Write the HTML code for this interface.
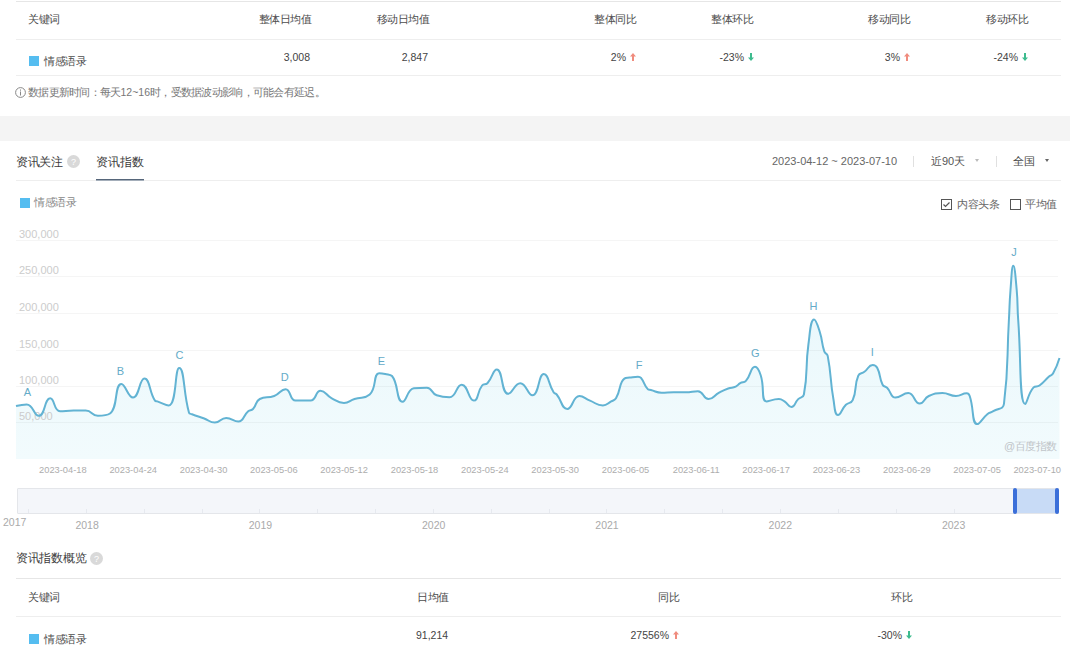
<!DOCTYPE html>
<html><head><meta charset="utf-8"><title>资讯指数</title><style>
html,body{margin:0;padding:0;width:1070px;height:660px;overflow:hidden;background:#fff;font-family:"Liberation Sans",sans-serif;}
.t{position:absolute;white-space:nowrap;line-height:1;}
.b{position:absolute;}
</style></head><body>
<div class="b" style="left:16px;top:1px;width:1045px;height:1px;background:#e6e6e6"></div>
<div class="b" style="left:16px;top:39px;width:1045px;height:1px;background:#eeeeee"></div>
<div class="b" style="left:16px;top:75px;width:1045px;height:1px;background:#eeeeee"></div>
<div class="t" style="left:28px;top:14px;font-size:10px;color:#4d4d4d;letter-spacing:-0.5px;font-size:11px;">关键词</div>
<div class="t" style="left:-89px;width:400px;text-align:right;top:14px;font-size:10px;color:#4d4d4d;letter-spacing:-0.5px;font-size:11px;">整体日均值</div>
<div class="t" style="left:29px;width:400px;text-align:right;top:14px;font-size:10px;color:#4d4d4d;letter-spacing:-0.5px;font-size:11px;">移动日均值</div>
<div class="t" style="left:236px;width:400px;text-align:right;top:14px;font-size:10px;color:#4d4d4d;letter-spacing:-0.5px;font-size:11px;">整体同比</div>
<div class="t" style="left:353px;width:400px;text-align:right;top:14px;font-size:10px;color:#4d4d4d;letter-spacing:-0.5px;font-size:11px;">整体环比</div>
<div class="t" style="left:510px;width:400px;text-align:right;top:14px;font-size:10px;color:#4d4d4d;letter-spacing:-0.5px;font-size:11px;">移动同比</div>
<div class="t" style="left:628px;width:400px;text-align:right;top:14px;font-size:10px;color:#4d4d4d;letter-spacing:-0.5px;font-size:11px;">移动环比</div>
<div class="b" style="left:29px;top:56px;width:10px;height:10px;background:#55bdf0"></div>
<div class="t" style="left:44px;top:56px;font-size:10px;color:#4d4d4d;letter-spacing:-0.5px;font-size:11px;">情感语录</div>
<div class="t" style="left:-90px;width:400px;text-align:right;top:52px;font-size:10.5px;color:#444;">3,008</div>
<div class="t" style="left:28px;width:400px;text-align:right;top:52px;font-size:10.5px;color:#444;">2,847</div>
<div class="t" style="left:236px;width:400px;text-align:right;top:52px;font-size:10.5px;color:#444;">2%<svg width="6" height="8" viewBox="0 0 6 8" style="vertical-align:0px;margin-left:4px"><path d="M3 0 L6 3.5 H4 V8 H2 V3.5 H0 Z" fill="#f08c7e"/></svg></div>
<div class="t" style="left:354px;width:400px;text-align:right;top:52px;font-size:10.5px;color:#444;">-23%<svg width="6" height="8" viewBox="0 0 6 8" style="vertical-align:0px;margin-left:4px"><path d="M3 8 L6 4.5 H4 V0 H2 V4.5 H0 Z" fill="#3dbb8e"/></svg></div>
<div class="t" style="left:510px;width:400px;text-align:right;top:52px;font-size:10.5px;color:#444;">3%<svg width="6" height="8" viewBox="0 0 6 8" style="vertical-align:0px;margin-left:4px"><path d="M3 0 L6 3.5 H4 V8 H2 V3.5 H0 Z" fill="#f08c7e"/></svg></div>
<div class="t" style="left:628px;width:400px;text-align:right;top:52px;font-size:10.5px;color:#444;">-24%<svg width="6" height="8" viewBox="0 0 6 8" style="vertical-align:0px;margin-left:4px"><path d="M3 8 L6 4.5 H4 V0 H2 V4.5 H0 Z" fill="#3dbb8e"/></svg></div>
<svg class="b" style="left:15px;top:87px" width="11" height="11" viewBox="0 0 11 11"><circle cx="5.5" cy="5.5" r="4.9" fill="none" stroke="#888" stroke-width="1"/><rect x="5" y="2.5" width="1" height="1.2" fill="#888"/><rect x="5" y="4.5" width="1" height="4" fill="#888"/></svg>
<div class="t" style="left:28px;top:87px;font-size:10.5px;color:#777;"><span style="font-size:11px;letter-spacing:-0.72px">数据更新时间：每天</span>12~16<span style="font-size:11px;letter-spacing:-0.72px">时，受数据波动影响，可能会有延迟。</span></div>
<div class="b" style="left:0px;top:116px;width:1070px;height:25px;background:#f4f4f4"></div>
<div class="t" style="left:16px;top:156px;font-size:12px;color:#3d3d3d;letter-spacing:-0.35px;">资讯关注</div>
<svg class="b" style="left:67px;top:155px" width="13" height="13" viewBox="0 0 13 13"><circle cx="6.5" cy="6.5" r="6.5" fill="#d9d9d9"/><text x="6.5" y="10" font-size="9" text-anchor="middle" fill="#fff" font-family="Liberation Sans">?</text></svg>
<div class="t" style="left:96px;top:156px;font-size:12px;color:#3d3d3d;">资讯指数</div>
<div class="b" style="left:16px;top:180px;width:1045px;height:1px;background:#eeeeee"></div>
<div class="b" style="left:96px;top:179px;width:48px;height:1px;background:#56667a"></div>
<div class="b" style="left:96px;top:180px;width:48px;height:1px;background:#a4aeba"></div>
<div class="t" style="left:772px;top:156px;font-size:11px;color:#666;">2023-04-12 ~ 2023-07-10</div>
<div class="b" style="left:913px;top:156px;width:1px;height:11px;background:#e0e0e0"></div>
<div class="t" style="left:931px;top:156px;font-size:11px;color:#555;">近90天</div>
<svg class="b" style="left:975px;top:159px" width="4" height="3" viewBox="0 0 4 3"><path d="M0 0H4L2 3Z" fill="#bbb"/></svg>
<div class="b" style="left:996px;top:156px;width:1px;height:11px;background:#e0e0e0"></div>
<div class="t" style="left:1013px;top:156px;font-size:11px;color:#444;">全国</div>
<svg class="b" style="left:1045px;top:159px" width="4" height="3" viewBox="0 0 4 3"><path d="M0 0H4L2 3Z" fill="#666"/></svg>
<div class="b" style="left:20px;top:198px;width:10px;height:10px;background:#55bdf0"></div>
<div class="t" style="left:34px;top:197px;font-size:10px;color:#888;letter-spacing:-0.5px;font-size:11px;">情感语录</div>
<svg class="b" style="left:941px;top:199px" width="11" height="11" viewBox="0 0 11 11"><rect x="0.5" y="0.5" width="10" height="10" fill="none" stroke="#555" stroke-width="1"/><path d="M2.5 5.5 L4.5 7.5 L8.5 3.5" fill="none" stroke="#555" stroke-width="1.2"/></svg>
<div class="t" style="left:957px;top:199px;font-size:10px;color:#666;letter-spacing:-0.5px;font-size:11px;">内容头条</div>
<svg class="b" style="left:1010px;top:199px" width="11" height="11" viewBox="0 0 11 11"><rect x="0.5" y="0.5" width="10" height="10" fill="none" stroke="#555" stroke-width="1"/></svg>
<div class="t" style="left:1025px;top:199px;font-size:10px;color:#666;letter-spacing:-0.5px;font-size:11px;">平均值</div>
<svg class="b" style="left:0;top:0" width="1070" height="480" viewBox="0 0 1070 480">
<defs><linearGradient id="g" x1="0" y1="0" x2="0" y2="1"><stop offset="0" stop-color="#e8f7fb"/><stop offset="1" stop-color="#f2fbfd"/></linearGradient></defs>
<path d="M16.00,406.00 C16.00,406.00 22.21,404.40 26.70,404.40 C33.61,404.40 33.59,415.80 38.80,415.80 C45.34,415.80 44.23,398.30 50.20,398.30 C54.83,398.30 53.64,411.20 60.00,411.20 C65.34,411.20 66.80,410.50 73.60,410.50 C79.70,410.50 79.97,410.50 85.80,410.50 C92.12,410.50 91.64,415.80 97.90,415.80 C103.74,415.80 106.71,415.80 110.00,413.50 C118.46,407.59 114.05,384.00 121.40,384.00 C125.55,384.00 127.87,397.60 133.00,397.60 C139.37,397.60 139.17,378.60 144.40,378.60 C150.17,378.60 149.13,392.58 155.00,400.60 C155.58,401.40 156.15,400.99 157.30,401.40 C162.95,403.44 166.02,405.50 168.60,405.50 C176.97,405.50 174.51,368.00 179.20,368.00 C184.71,368.00 183.04,392.23 189.00,412.70 C189.44,414.20 190.44,413.60 192.00,414.20 C198.04,416.50 198.13,416.26 204.20,418.50 C209.53,420.46 209.52,422.60 214.80,422.60 C220.52,422.60 220.40,418.00 226.20,418.00 C232.15,418.00 233.15,421.50 238.30,421.50 C244.15,421.50 242.83,415.76 248.20,411.20 C250.18,409.51 251.24,410.85 253.00,409.00 C257.04,404.75 255.02,401.47 259.80,399.00 C265.62,396.00 267.42,398.58 274.20,396.00 C280.32,393.68 280.62,389.20 285.60,389.20 C291.27,389.20 289.25,400.60 295.50,400.60 C301.75,400.60 304.10,400.60 310.60,400.60 C316.60,400.60 315.13,390.80 320.50,390.80 C325.73,390.80 325.81,395.22 331.80,398.30 C337.56,401.27 337.89,402.90 344.00,402.90 C349.24,402.90 349.18,400.74 354.50,399.00 C362.03,396.54 364.71,399.00 369.70,394.50 C377.01,387.92 372.97,373.30 379.10,373.30 C380.72,373.30 382.21,373.37 385.20,374.00 C388.66,374.72 390.24,374.00 392.00,376.00 C398.94,383.87 395.90,401.80 402.60,401.80 C406.85,401.80 406.91,388.88 413.90,388.20 C419.01,387.70 421.00,387.70 426.80,387.70 C432.40,387.70 431.13,393.37 436.70,395.30 C442.48,397.30 444.19,397.30 449.50,397.30 C456.69,397.30 456.02,384.70 461.70,384.70 C468.17,384.70 468.32,400.60 473.80,400.60 C478.52,400.60 477.01,392.02 482.10,385.50 C483.81,383.32 485.50,385.26 487.40,383.20 C492.85,377.26 492.82,369.50 496.80,369.50 C503.22,369.50 500.85,393.80 508.20,393.80 C512.60,393.80 514.44,383.20 520.30,383.20 C526.54,383.20 527.52,395.30 532.40,395.30 C539.27,395.30 538.10,374.10 543.80,374.10 C548.70,374.10 548.15,383.68 553.60,392.30 C554.60,393.88 555.50,393.04 556.70,394.50 C562.35,401.39 561.59,409.00 567.30,409.00 C572.94,409.00 572.52,396.00 579.40,396.00 C583.87,396.00 584.65,398.44 590.00,400.60 C596.40,403.19 596.56,405.50 602.90,405.50 C607.16,405.50 607.15,403.63 611.20,401.40 C613.70,400.03 614.61,400.70 616.00,398.30 C621.21,389.30 618.93,382.57 624.40,378.60 C625.78,377.60 627.03,377.97 629.70,377.60 C633.83,377.02 633.93,376.70 638.00,376.70 C639.58,376.70 640.03,376.70 641.00,377.90 C644.98,382.82 643.89,385.79 647.90,389.20 C648.84,390.00 649.40,389.61 650.90,390.00 C656.20,391.36 656.11,392.70 661.50,392.70 C667.46,392.70 667.55,392.30 673.60,392.30 C679.70,392.30 679.71,392.30 685.80,392.30 C691.86,392.30 692.46,391.20 697.90,391.20 C703.81,391.20 703.03,399.10 708.50,399.10 C713.63,399.10 713.66,395.63 719.10,392.70 C723.51,390.33 723.52,390.22 728.20,388.50 C731.82,387.17 732.23,388.13 735.70,386.60 C738.23,385.48 737.76,384.56 740.20,383.20 C742.86,381.71 743.92,383.10 745.90,380.90 C751.32,374.90 750.39,366.80 755.00,366.80 C757.79,366.80 759.13,370.45 760.70,375.20 C764.83,387.75 760.70,401.40 766.40,401.40 C769.10,401.40 772.77,399.10 778.90,399.10 C781.82,399.10 781.97,399.80 784.50,401.40 C788.22,403.75 788.25,407.00 791.40,407.00 C795.10,407.00 794.53,402.77 798.20,399.10 C800.78,396.52 803.25,397.98 803.90,394.50 C808.35,370.68 805.02,369.32 808.40,344.50 C810.12,331.82 810.39,319.50 814.10,319.50 C816.09,319.50 817.72,325.49 819.80,332.00 C822.82,341.44 821.22,342.09 824.30,351.40 C825.17,354.04 827.18,353.17 827.70,355.90 C831.73,376.97 829.68,377.63 833.40,399.00 C834.83,407.18 834.48,415.00 838.00,415.00 C840.73,415.00 841.41,409.32 845.90,404.80 C848.76,401.92 851.18,403.78 852.70,400.20 C857.38,389.18 853.75,386.65 858.30,375.60 C859.60,372.45 861.51,373.93 864.40,371.80 C868.71,368.63 868.43,365.00 872.70,365.00 C874.88,365.00 876.12,365.65 877.30,368.00 C881.07,375.50 878.86,377.17 882.60,384.70 C883.76,387.02 885.20,385.80 887.10,387.70 C891.65,392.25 890.32,397.60 895.50,397.60 C900.92,397.60 902.66,393.00 908.30,393.00 C914.76,393.00 913.88,403.60 919.70,403.60 C924.13,403.60 923.58,398.44 928.80,396.00 C934.93,393.14 935.60,393.00 942.40,393.00 C949.20,393.00 949.22,396.00 956.00,396.00 C961.37,396.00 961.68,393.30 966.70,393.30 C968.53,393.30 969.05,394.12 969.70,396.00 C974.35,409.52 971.37,424.10 977.30,424.10 C980.17,424.10 981.88,418.57 987.30,414.20 C989.88,412.12 990.48,412.99 993.30,411.20 C998.83,407.69 1003.23,409.78 1004.00,403.60 C1008.90,364.18 1006.51,361.80 1008.90,320.00 C1009.76,305.00 1009.29,304.96 1010.50,290.00 C1011.49,277.86 1011.75,265.80 1013.30,265.80 C1014.85,265.80 1015.60,277.84 1016.70,290.00 C1018.05,304.94 1017.07,305.03 1018.20,320.00 C1021.37,362.03 1018.99,404.00 1025.30,404.00 C1026.69,404.00 1028.28,393.09 1033.60,387.40 C1035.38,385.50 1037.03,387.25 1039.50,385.50 C1044.73,381.80 1044.12,380.84 1049.00,376.50 C1050.87,374.84 1051.80,375.62 1053.00,373.50 C1057.05,366.37 1059.50,358.00 1059.50,358.00 L1059.50,459 L16.00,459 Z" fill="url(#g)"/>
</svg>
<div class="b" style="left:16px;top:240px;width:1042px;height:1px;background:rgba(0,0,0,0.04)"></div>
<div class="b" style="left:16px;top:276px;width:1042px;height:1px;background:rgba(0,0,0,0.04)"></div>
<div class="b" style="left:16px;top:313px;width:1042px;height:1px;background:rgba(0,0,0,0.04)"></div>
<div class="b" style="left:16px;top:350px;width:1042px;height:1px;background:rgba(0,0,0,0.04)"></div>
<div class="b" style="left:16px;top:386px;width:1042px;height:1px;background:rgba(0,0,0,0.04)"></div>
<div class="b" style="left:16px;top:422px;width:1042px;height:1px;background:rgba(0,0,0,0.04)"></div>
<div class="t" style="left:19px;top:229px;font-size:11px;color:#cccccc;">300,000</div>
<div class="t" style="left:19px;top:265px;font-size:11px;color:#cccccc;">250,000</div>
<div class="t" style="left:19px;top:302px;font-size:11px;color:#cccccc;">200,000</div>
<div class="t" style="left:19px;top:339px;font-size:11px;color:#cccccc;">150,000</div>
<div class="t" style="left:19px;top:375px;font-size:11px;color:#cccccc;">100,000</div>
<div class="t" style="left:19px;top:411px;font-size:11px;color:#cccccc;">50,000</div>
<svg class="b" style="left:0;top:0" width="1070" height="480" viewBox="0 0 1070 480"><path d="M16.00,406.00 C16.00,406.00 22.21,404.40 26.70,404.40 C33.61,404.40 33.59,415.80 38.80,415.80 C45.34,415.80 44.23,398.30 50.20,398.30 C54.83,398.30 53.64,411.20 60.00,411.20 C65.34,411.20 66.80,410.50 73.60,410.50 C79.70,410.50 79.97,410.50 85.80,410.50 C92.12,410.50 91.64,415.80 97.90,415.80 C103.74,415.80 106.71,415.80 110.00,413.50 C118.46,407.59 114.05,384.00 121.40,384.00 C125.55,384.00 127.87,397.60 133.00,397.60 C139.37,397.60 139.17,378.60 144.40,378.60 C150.17,378.60 149.13,392.58 155.00,400.60 C155.58,401.40 156.15,400.99 157.30,401.40 C162.95,403.44 166.02,405.50 168.60,405.50 C176.97,405.50 174.51,368.00 179.20,368.00 C184.71,368.00 183.04,392.23 189.00,412.70 C189.44,414.20 190.44,413.60 192.00,414.20 C198.04,416.50 198.13,416.26 204.20,418.50 C209.53,420.46 209.52,422.60 214.80,422.60 C220.52,422.60 220.40,418.00 226.20,418.00 C232.15,418.00 233.15,421.50 238.30,421.50 C244.15,421.50 242.83,415.76 248.20,411.20 C250.18,409.51 251.24,410.85 253.00,409.00 C257.04,404.75 255.02,401.47 259.80,399.00 C265.62,396.00 267.42,398.58 274.20,396.00 C280.32,393.68 280.62,389.20 285.60,389.20 C291.27,389.20 289.25,400.60 295.50,400.60 C301.75,400.60 304.10,400.60 310.60,400.60 C316.60,400.60 315.13,390.80 320.50,390.80 C325.73,390.80 325.81,395.22 331.80,398.30 C337.56,401.27 337.89,402.90 344.00,402.90 C349.24,402.90 349.18,400.74 354.50,399.00 C362.03,396.54 364.71,399.00 369.70,394.50 C377.01,387.92 372.97,373.30 379.10,373.30 C380.72,373.30 382.21,373.37 385.20,374.00 C388.66,374.72 390.24,374.00 392.00,376.00 C398.94,383.87 395.90,401.80 402.60,401.80 C406.85,401.80 406.91,388.88 413.90,388.20 C419.01,387.70 421.00,387.70 426.80,387.70 C432.40,387.70 431.13,393.37 436.70,395.30 C442.48,397.30 444.19,397.30 449.50,397.30 C456.69,397.30 456.02,384.70 461.70,384.70 C468.17,384.70 468.32,400.60 473.80,400.60 C478.52,400.60 477.01,392.02 482.10,385.50 C483.81,383.32 485.50,385.26 487.40,383.20 C492.85,377.26 492.82,369.50 496.80,369.50 C503.22,369.50 500.85,393.80 508.20,393.80 C512.60,393.80 514.44,383.20 520.30,383.20 C526.54,383.20 527.52,395.30 532.40,395.30 C539.27,395.30 538.10,374.10 543.80,374.10 C548.70,374.10 548.15,383.68 553.60,392.30 C554.60,393.88 555.50,393.04 556.70,394.50 C562.35,401.39 561.59,409.00 567.30,409.00 C572.94,409.00 572.52,396.00 579.40,396.00 C583.87,396.00 584.65,398.44 590.00,400.60 C596.40,403.19 596.56,405.50 602.90,405.50 C607.16,405.50 607.15,403.63 611.20,401.40 C613.70,400.03 614.61,400.70 616.00,398.30 C621.21,389.30 618.93,382.57 624.40,378.60 C625.78,377.60 627.03,377.97 629.70,377.60 C633.83,377.02 633.93,376.70 638.00,376.70 C639.58,376.70 640.03,376.70 641.00,377.90 C644.98,382.82 643.89,385.79 647.90,389.20 C648.84,390.00 649.40,389.61 650.90,390.00 C656.20,391.36 656.11,392.70 661.50,392.70 C667.46,392.70 667.55,392.30 673.60,392.30 C679.70,392.30 679.71,392.30 685.80,392.30 C691.86,392.30 692.46,391.20 697.90,391.20 C703.81,391.20 703.03,399.10 708.50,399.10 C713.63,399.10 713.66,395.63 719.10,392.70 C723.51,390.33 723.52,390.22 728.20,388.50 C731.82,387.17 732.23,388.13 735.70,386.60 C738.23,385.48 737.76,384.56 740.20,383.20 C742.86,381.71 743.92,383.10 745.90,380.90 C751.32,374.90 750.39,366.80 755.00,366.80 C757.79,366.80 759.13,370.45 760.70,375.20 C764.83,387.75 760.70,401.40 766.40,401.40 C769.10,401.40 772.77,399.10 778.90,399.10 C781.82,399.10 781.97,399.80 784.50,401.40 C788.22,403.75 788.25,407.00 791.40,407.00 C795.10,407.00 794.53,402.77 798.20,399.10 C800.78,396.52 803.25,397.98 803.90,394.50 C808.35,370.68 805.02,369.32 808.40,344.50 C810.12,331.82 810.39,319.50 814.10,319.50 C816.09,319.50 817.72,325.49 819.80,332.00 C822.82,341.44 821.22,342.09 824.30,351.40 C825.17,354.04 827.18,353.17 827.70,355.90 C831.73,376.97 829.68,377.63 833.40,399.00 C834.83,407.18 834.48,415.00 838.00,415.00 C840.73,415.00 841.41,409.32 845.90,404.80 C848.76,401.92 851.18,403.78 852.70,400.20 C857.38,389.18 853.75,386.65 858.30,375.60 C859.60,372.45 861.51,373.93 864.40,371.80 C868.71,368.63 868.43,365.00 872.70,365.00 C874.88,365.00 876.12,365.65 877.30,368.00 C881.07,375.50 878.86,377.17 882.60,384.70 C883.76,387.02 885.20,385.80 887.10,387.70 C891.65,392.25 890.32,397.60 895.50,397.60 C900.92,397.60 902.66,393.00 908.30,393.00 C914.76,393.00 913.88,403.60 919.70,403.60 C924.13,403.60 923.58,398.44 928.80,396.00 C934.93,393.14 935.60,393.00 942.40,393.00 C949.20,393.00 949.22,396.00 956.00,396.00 C961.37,396.00 961.68,393.30 966.70,393.30 C968.53,393.30 969.05,394.12 969.70,396.00 C974.35,409.52 971.37,424.10 977.30,424.10 C980.17,424.10 981.88,418.57 987.30,414.20 C989.88,412.12 990.48,412.99 993.30,411.20 C998.83,407.69 1003.23,409.78 1004.00,403.60 C1008.90,364.18 1006.51,361.80 1008.90,320.00 C1009.76,305.00 1009.29,304.96 1010.50,290.00 C1011.49,277.86 1011.75,265.80 1013.30,265.80 C1014.85,265.80 1015.60,277.84 1016.70,290.00 C1018.05,304.94 1017.07,305.03 1018.20,320.00 C1021.37,362.03 1018.99,404.00 1025.30,404.00 C1026.69,404.00 1028.28,393.09 1033.60,387.40 C1035.38,385.50 1037.03,387.25 1039.50,385.50 C1044.73,381.80 1044.12,380.84 1049.00,376.50 C1050.87,374.84 1051.80,375.62 1053.00,373.50 C1057.05,366.37 1059.50,358.00 1059.50,358.00" fill="none" stroke="#62b3d3" stroke-width="2" stroke-linejoin="round"/></svg>
<div class="t" style="left:7.5px;width:40px;text-align:center;top:387px;font-size:11px;color:#64abc8">A</div>
<div class="t" style="left:100.5px;width:40px;text-align:center;top:366px;font-size:11px;color:#64abc8">B</div>
<div class="t" style="left:159.4px;width:40px;text-align:center;top:350px;font-size:11px;color:#64abc8">C</div>
<div class="t" style="left:264.8px;width:40px;text-align:center;top:372px;font-size:11px;color:#64abc8">D</div>
<div class="t" style="left:361.5px;width:40px;text-align:center;top:356px;font-size:11px;color:#64abc8">E</div>
<div class="t" style="left:619px;width:40px;text-align:center;top:360px;font-size:11px;color:#64abc8">F</div>
<div class="t" style="left:735.2px;width:40px;text-align:center;top:348px;font-size:11px;color:#64abc8">G</div>
<div class="t" style="left:793.6px;width:40px;text-align:center;top:301px;font-size:11px;color:#64abc8">H</div>
<div class="t" style="left:852.2px;width:40px;text-align:center;top:347px;font-size:11px;color:#64abc8">I</div>
<div class="t" style="left:994px;width:40px;text-align:center;top:247px;font-size:11px;color:#64abc8">J</div>
<div class="t" style="left:-313.4px;width:400px;text-align:right;top:466px;font-size:9.3px;color:#adadad;">2023-04-18</div>
<div class="t" style="left:-243.0px;width:400px;text-align:right;top:466px;font-size:9.3px;color:#adadad;">2023-04-24</div>
<div class="t" style="left:-172.7px;width:400px;text-align:right;top:466px;font-size:9.3px;color:#adadad;">2023-04-30</div>
<div class="t" style="left:-102.39999999999998px;width:400px;text-align:right;top:466px;font-size:9.3px;color:#adadad;">2023-05-06</div>
<div class="t" style="left:-32.10000000000002px;width:400px;text-align:right;top:466px;font-size:9.3px;color:#adadad;">2023-05-12</div>
<div class="t" style="left:38.30000000000001px;width:400px;text-align:right;top:466px;font-size:9.3px;color:#adadad;">2023-05-18</div>
<div class="t" style="left:108.60000000000002px;width:400px;text-align:right;top:466px;font-size:9.3px;color:#adadad;">2023-05-24</div>
<div class="t" style="left:178.89999999999998px;width:400px;text-align:right;top:466px;font-size:9.3px;color:#adadad;">2023-05-30</div>
<div class="t" style="left:249.29999999999995px;width:400px;text-align:right;top:466px;font-size:9.3px;color:#adadad;">2023-06-05</div>
<div class="t" style="left:319.6px;width:400px;text-align:right;top:466px;font-size:9.3px;color:#adadad;">2023-06-11</div>
<div class="t" style="left:389.9px;width:400px;text-align:right;top:466px;font-size:9.3px;color:#adadad;">2023-06-17</div>
<div class="t" style="left:460.20000000000005px;width:400px;text-align:right;top:466px;font-size:9.3px;color:#adadad;">2023-06-23</div>
<div class="t" style="left:530.6px;width:400px;text-align:right;top:466px;font-size:9.3px;color:#adadad;">2023-06-29</div>
<div class="t" style="left:600.9px;width:400px;text-align:right;top:466px;font-size:9.3px;color:#adadad;">2023-07-05</div>
<div class="t" style="left:661px;width:400px;text-align:right;top:466px;font-size:9.3px;color:#adadad;">2023-07-10</div>
<div class="t" style="left:1004px;top:441px;font-size:10px;color:#bfc4c8;letter-spacing:-0.5px;font-size:11px;">@百度指数</div>
<div class="b" style="left:17px;top:488px;width:1040px;height:24px;background:#f4f6fa;border:1px solid #e4e6ea;border-radius:1px"></div>
<div class="b" style="left:28px;top:509px;width:1px;height:4px;background:#e6e9ef"></div>
<div class="b" style="left:86px;top:509px;width:1px;height:4px;background:#e6e9ef"></div>
<div class="b" style="left:144px;top:509px;width:1px;height:4px;background:#e6e9ef"></div>
<div class="b" style="left:202px;top:509px;width:1px;height:4px;background:#e6e9ef"></div>
<div class="b" style="left:259px;top:509px;width:1px;height:4px;background:#e6e9ef"></div>
<div class="b" style="left:317px;top:509px;width:1px;height:4px;background:#e6e9ef"></div>
<div class="b" style="left:375px;top:509px;width:1px;height:4px;background:#e6e9ef"></div>
<div class="b" style="left:433px;top:509px;width:1px;height:4px;background:#e6e9ef"></div>
<div class="b" style="left:491px;top:509px;width:1px;height:4px;background:#e6e9ef"></div>
<div class="b" style="left:549px;top:509px;width:1px;height:4px;background:#e6e9ef"></div>
<div class="b" style="left:606px;top:509px;width:1px;height:4px;background:#e6e9ef"></div>
<div class="b" style="left:664px;top:509px;width:1px;height:4px;background:#e6e9ef"></div>
<div class="b" style="left:722px;top:509px;width:1px;height:4px;background:#e6e9ef"></div>
<div class="b" style="left:780px;top:509px;width:1px;height:4px;background:#e6e9ef"></div>
<div class="b" style="left:838px;top:509px;width:1px;height:4px;background:#e6e9ef"></div>
<div class="b" style="left:896px;top:509px;width:1px;height:4px;background:#e6e9ef"></div>
<div class="b" style="left:954px;top:509px;width:1px;height:4px;background:#e6e9ef"></div>
<div class="b" style="left:1015px;top:489px;width:42px;height:24px;background:#c8dbf6"></div>
<div class="b" style="left:1013px;top:488px;width:4px;height:26px;background:#3b6fd9;border-radius:2px"></div>
<div class="b" style="left:1055px;top:488px;width:4px;height:26px;background:#3b6fd9;border-radius:2px"></div>
<div class="t" style="left:3px;top:517px;font-size:10.5px;color:#aaa;">2017</div>
<div class="t" style="left:57.099999999999994px;width:60px;text-align:center;top:520px;font-size:10.5px;color:#aaa">2018</div>
<div class="t" style="left:230.39999999999998px;width:60px;text-align:center;top:520px;font-size:10.5px;color:#aaa">2019</div>
<div class="t" style="left:403.70000000000005px;width:60px;text-align:center;top:520px;font-size:10.5px;color:#aaa">2020</div>
<div class="t" style="left:577.0000000000001px;width:60px;text-align:center;top:520px;font-size:10.5px;color:#aaa">2021</div>
<div class="t" style="left:750.3000000000001px;width:60px;text-align:center;top:520px;font-size:10.5px;color:#aaa">2022</div>
<div class="t" style="left:923.6px;width:60px;text-align:center;top:520px;font-size:10.5px;color:#aaa">2023</div>
<div class="t" style="left:16px;top:552px;font-size:12px;color:#3d3d3d;letter-spacing:-0.3px;">资讯指数概览</div>
<svg class="b" style="left:90px;top:552px" width="13" height="13" viewBox="0 0 13 13"><circle cx="6.5" cy="6.5" r="6.5" fill="#d9d9d9"/><text x="6.5" y="10" font-size="9" text-anchor="middle" fill="#fff" font-family="Liberation Sans">?</text></svg>
<div class="b" style="left:16px;top:578px;width:1045px;height:1px;background:#e6e6e6"></div>
<div class="b" style="left:16px;top:616px;width:1045px;height:1px;background:#eeeeee"></div>
<div class="t" style="left:28px;top:592px;font-size:10px;color:#4d4d4d;letter-spacing:-0.5px;font-size:11px;">关键词</div>
<div class="t" style="left:417px;top:592px;font-size:10px;color:#4d4d4d;letter-spacing:-0.5px;font-size:11px;">日均值</div>
<div class="t" style="left:279px;width:400px;text-align:right;top:592px;font-size:10px;color:#4d4d4d;letter-spacing:-0.5px;font-size:11px;">同比</div>
<div class="t" style="left:512px;width:400px;text-align:right;top:592px;font-size:10px;color:#4d4d4d;letter-spacing:-0.5px;font-size:11px;">环比</div>
<div class="b" style="left:29px;top:634px;width:10px;height:10px;background:#55bdf0"></div>
<div class="t" style="left:44px;top:634px;font-size:10px;color:#4d4d4d;letter-spacing:-0.5px;font-size:11px;">情感语录</div>
<div class="t" style="left:416px;top:630px;font-size:10.5px;color:#444;">91,214</div>
<div class="t" style="left:279px;width:400px;text-align:right;top:630px;font-size:10.5px;color:#444;">27556%<svg width="6" height="8" viewBox="0 0 6 8" style="vertical-align:0px;margin-left:4px"><path d="M3 0 L6 3.5 H4 V8 H2 V3.5 H0 Z" fill="#f08c7e"/></svg></div>
<div class="t" style="left:512px;width:400px;text-align:right;top:630px;font-size:10.5px;color:#444;">-30%<svg width="6" height="8" viewBox="0 0 6 8" style="vertical-align:0px;margin-left:4px"><path d="M3 8 L6 4.5 H4 V0 H2 V4.5 H0 Z" fill="#3dbb8e"/></svg></div>
</body></html>
